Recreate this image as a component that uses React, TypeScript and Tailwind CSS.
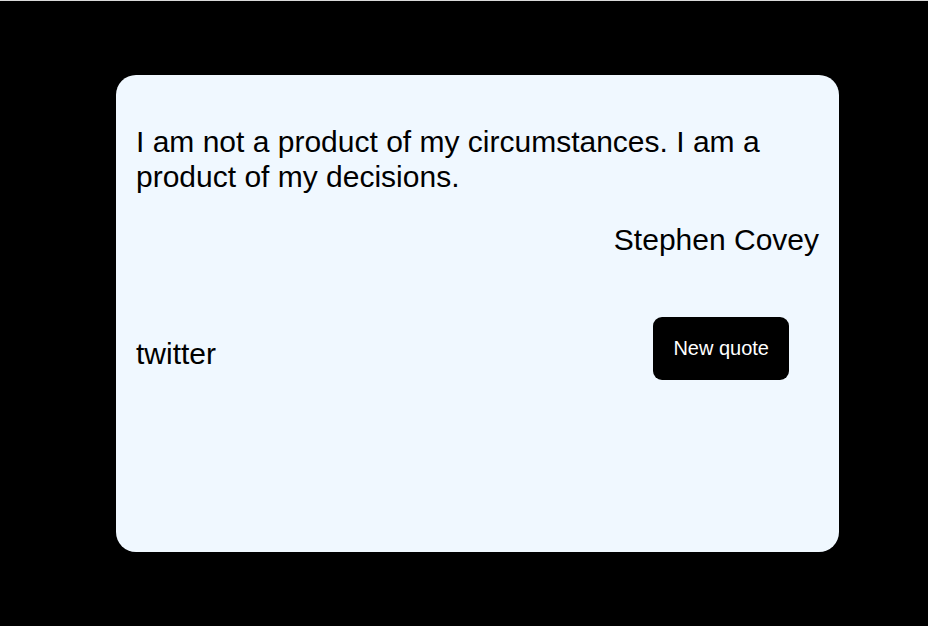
import React from "react";

export default function App() {
  return (
    <div className="min-h-[626px] bg-black border-t border-[#d9d9d9] font-['Liberation_Sans',Arial,sans-serif]">
      {/* Quote card */}
      <div className="ml-[116px] mt-[74px] w-[723px] h-[477px] rounded-[20px] bg-[#f0f8ff] px-5 pt-[50px] text-black">
        <p className="text-[30px] leading-[1.15]">
          I am not a product of my circumstances. I am a product of my decisions.
        </p>
        <p className="mt-[29px] text-right text-[30px] leading-[1.15]">Stephen Covey</p>
        <div className="mt-[59px] flex items-start justify-between">
          <a className="mt-[20px] text-[30px] leading-[1.15]">twitter</a>
          <button className="mr-[30px] rounded-[9px] bg-black px-5 py-5 text-[20px] leading-[1.15] text-white">
            New quote
          </button>
        </div>
      </div>
    </div>
  );
}
